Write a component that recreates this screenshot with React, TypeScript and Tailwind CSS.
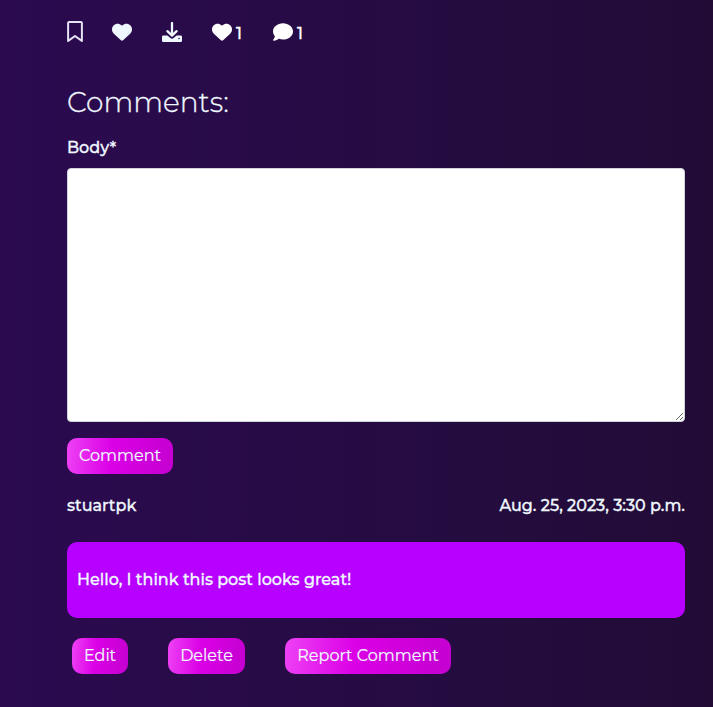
import React from 'react';
import { FaComment, FaHeart, FaRegBookmark } from 'react-icons/fa6';

function DownloadIcon({ className = '' }: { className?: string }) {
  return (
    <svg viewBox="0 0 20 20" className={`size-5 shrink-0 ${className}`} fill="none">
      <path d="M1.3 13.4H5.4L8.4 16Q10 17.4 11.6 16L14.6 13.4H18.7Q20 13.4 20 14.7V18.7Q20 20 18.7 20H1.3Q0 20 0 18.7V14.7Q0 13.4 1.3 13.4Z" fill="currentColor" />
      <path d="M10 1V13M5.4 9.2L10 13.6L14.6 9.2" stroke="currentColor" strokeWidth="2.3" strokeLinecap="round" strokeLinejoin="round" />
      <circle cx="17" cy="16.5" r=".75" fill="#280b48" />
    </svg>
  );
}

function Action({ children, className = '' }: { children: string; className?: string }) {
  return (
    <button className={`flex h-9 items-center justify-center whitespace-nowrap rounded-[10px] bg-[linear-gradient(95deg,#ee42f5_0%,#db00e6_42%,#c400d0_100%)] pb-px text-base font-normal text-[#f0f8ff] [-webkit-text-stroke:0.2px] ${className}`}>
      {children}
    </button>
  );
}

export default function App() {
  return (
    <main className="h-[707px] w-full overflow-hidden bg-[linear-gradient(90deg,#2b0a50_0%,#240c3e_70%,#220c36_100%)] pl-[67px] pr-7 pt-[21px] font-['Montserrat','Inter',sans-serif] text-base font-medium leading-6 text-[#f0f8ff] [-webkit-text-stroke:0.3px]">
      <div className="flex h-6 items-start">
        <FaRegBookmark className="h-[21px] w-4 text-[#e6e4f4]" />
        <FaHeart className="ml-[29px] mt-[0.5px] size-5" />
        <DownloadIcon className="ml-[30px] mt-[0.7px]" />
        <FaHeart className="ml-[30px] mt-[0.5px] size-5 text-white" />
        <span className="ml-1 mt-px text-white">1</span>
        <FaComment className="ml-[31px] mt-[0.5px] size-5 text-white" />
        <span className="ml-1 mt-px text-white">1</span>
      </div>
      <h1 className="mt-10 h-[34px] text-[28px] font-light leading-[34px]">Comments:</h1>
      <label htmlFor="body" className="mt-[17px] block h-6">Body*</label>
      <textarea id="body" className="mt-2 block h-[254px] w-full resize rounded-[4px] border border-[#ced4da] bg-white p-3 text-black outline-none" />
      <Action className="mt-4 w-[106px]">Comment</Action>
      <div className="mt-5 flex h-6 justify-between">
        <span>stuartpk</span>
        <time>Aug. 25, 2023, 3:30 p.m.</time>
      </div>
      <div className="mt-6 flex h-[76px] items-center rounded-[10px] bg-[#b700ff] pl-2.5">Hello, I think this post looks great!</div>
      <div className="ml-[5px] mt-5 flex gap-10">
        <Action className="w-14">Edit</Action>
        <Action className="w-[77px]">Delete</Action>
        <Action className="w-[166px]">Report Comment</Action>
      </div>
    </main>
  );
}
